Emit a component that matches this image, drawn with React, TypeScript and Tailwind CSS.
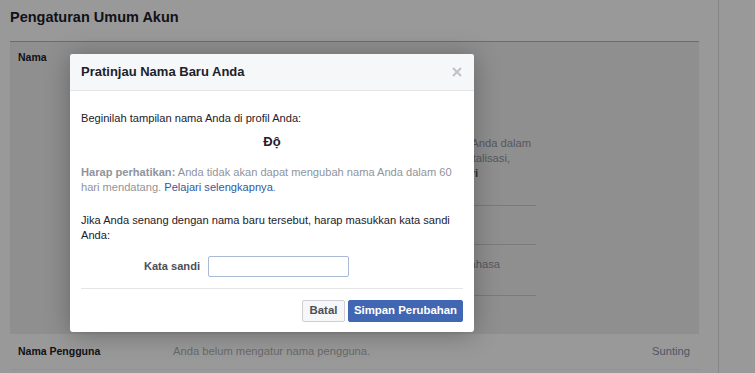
const font = { fontFamily: '"Liberation Sans", Helvetica, Arial, sans-serif' };

function SettingsPage() {
  return (
    <div className="flex min-h-[373px] bg-white text-[11.2px] text-[#1d2129]">
      <div className="w-[718px] pl-[10px] pr-[19px]">
        <h1 className="h-[41px] pt-[7px] text-[14.5px] font-bold leading-[20px] text-[#1d2129]">
          Pengaturan Umum Akun
        </h1>
        <div className="border-t border-[#b5b5b5]" />

        <section className="flex h-[292px] bg-[#eeeeee] px-[8px] pt-[7px]">
          <div className="w-[155px] text-[10.5px] font-bold leading-[16px]">Nama</div>
          <div className="w-[363px]">
            <div className="h-[87px]" />
            <div className="whitespace-nowrap leading-[15px] text-[#90949c]">
              <div className="w-[358px] text-right">Ingat: ini harus nama yang biasa dipakai Anda dalam</div>
              <div className="w-[337px] text-right">tanda baca, kapitalisasi,</div>
              <div className="w-[305px] text-right font-bold text-[#4b4f56]">Pelajari</div>
            </div>
            <div className="h-[25px] border-b border-[#cccccc]" />
            <div className="h-[39px] border-b border-[#cccccc]" />
            <div className="flex h-[51px] items-start border-b border-[#cccccc] pt-[11px] leading-[16px] text-[#90949c]">
              <div className="w-[327px] whitespace-nowrap text-right">Tambahkan nama dalam bahasa</div>
            </div>
          </div>
        </section>

        <div className="flex h-[36px] items-center border-b border-[#f3f3f3] px-[8px]">
          <div className="w-[155px] text-[10.5px] font-bold">Nama Pengguna</div>
          <div className="flex-1 text-[#b0b0b0]">Anda belum mengatur nama pengguna.</div>
          <div className="pr-[1px] text-[#8490aa]">Sunting</div>
        </div>
      </div>
      <div className="flex-1 border-l border-[#e0e0e0]" />
    </div>
  );
}

function PreviewDialog() {
  return (
    <div className="absolute left-[70px] top-[54px] w-[404px] overflow-hidden rounded-[3px] bg-white text-[11.1px] text-[#1d2129] shadow-[0_2px_26px_rgba(0,0,0,0.3)]">
      <div className="flex h-[37px] items-center justify-between border-b border-[#e5e5e5] bg-[#f6f7f9] pl-[11px] pr-[12px]">
        <h2 className="text-[13px] font-bold text-[#1d2129]">Pratinjau Nama Baru Anda</h2>
        <svg width="10" height="10" viewBox="0 0 10 10" className="text-[#bec2c9]">
          <path d="M1 1L9 9M9 1L1 9" stroke="currentColor" strokeWidth="2" />
        </svg>
      </div>

      <div className="px-[11px] pb-[10px] pt-[19px]">
        <p className="leading-[16px]">Beginilah tampilan nama Anda di profil Anda:</p>
        <p className="mt-[7px] text-center text-[13px] font-bold leading-[18px]">Độ</p>
        <p className="mt-[14px] leading-[15px] text-[#90949c]">
          <span className="font-bold">Harap perhatikan:</span> Anda tidak akan dapat mengubah nama Anda dalam 60
          hari mendatang. <span className="text-[#365899]">Pelajari selengkapnya</span>.
        </p>
        <p className="mt-[18px] leading-[15px]">
          Jika Anda senang dengan nama baru tersebut, harap masukkan kata sandi Anda:
        </p>

        <div className="mt-[13px] flex items-center gap-[8px]">
          <label className="w-[119px] text-right font-bold text-[#4b4f56]">Kata sandi</label>
          <input
            type="password"
            className="h-[21px] w-[141px] rounded-[2px] border border-[#a9b9d6] px-[3px] outline-none"
          />
        </div>

        <div className="mt-[11px] border-t border-[#e5e5e5]" />

        <div className="mt-[11px] flex justify-end gap-[3px]">
          <button className="h-[22px] w-[43px] rounded-[2px] border border-[#ced0d4] bg-[#f6f7f9] text-[11.4px] font-bold text-[#4b4f56]">
            Batal
          </button>
          <button className="h-[22px] w-[115px] rounded-[2px] border border-[#4267b2] bg-[#4267b2] text-[11.4px] font-bold text-white">
            Simpan Perubahan
          </button>
        </div>
      </div>
    </div>
  );
}

export default function App() {
  return (
    <div className="relative h-[373px] w-[755px] overflow-hidden" style={font}>
      <SettingsPage />
      <div className="absolute inset-0 bg-black/40" />
      <PreviewDialog />
    </div>
  );
}
